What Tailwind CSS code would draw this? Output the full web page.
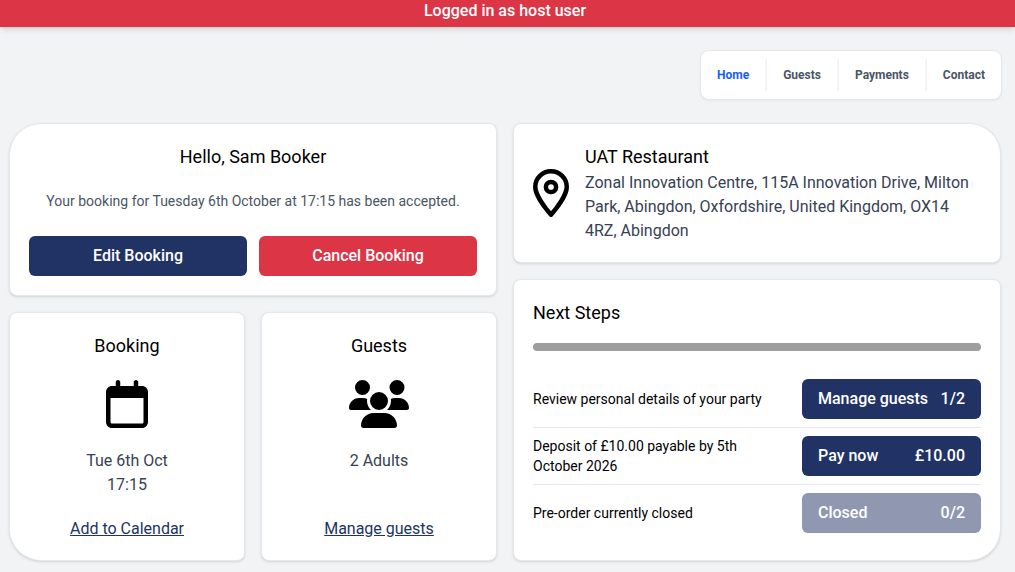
<!DOCTYPE html>
<html lang="en">

<head>
  <meta charset="UTF-8">
  <meta name="viewport" content="width=device-width, initial-scale=1.0">
  <script src="https://cdn.jsdelivr.net/npm/@tailwindcss/browser@4"></script>
  <title>Your booking</title>
</head>

<body class="bg-[#f2f3f5] min-h-screen font-['Roboto',sans-serif] text-base text-black">

  <div class="bg-[#dc3545] text-white font-medium text-center pl-[9px] pr-[14px] pb-[5px] shadow-md">
    <p class="leading-[22px]">Logged in as host user</p>
  </div>

  <div class="pl-[9px] pr-[14px] pb-[11px]">

    <!-- Navigation -->
    <nav class="flex justify-end py-6">
      <ul
        class="flex py-2 bg-white ring-1 ring-gray-200 rounded-lg shadow-sm text-xs font-bold text-gray-600 divide-x-2 divide-gray-100">
        <li><a href="#" class="block px-4 leading-8 text-blue-600">Home</a></li>
        <li><a href="#" class="block px-4 leading-8">Guests</a></li>
        <li><a href="#" class="block px-4 leading-8">Payments</a></li>
        <li><a href="#" class="block px-4 leading-8">Contact</a></li>
      </ul>
    </nav>

    <main class="grid grid-cols-2 gap-4">

      <div class="flex flex-col gap-4">
        <!-- Greeting -->
        <section
          class="bg-white border border-gray-200 rounded-lg rounded-tl-[32px] shadow-sm p-[19px] text-center">
          <h1 class="text-lg leading-7">Hello, Sam Booker</h1>
          <p class="mt-5 text-sm leading-5 text-gray-600">Your booking for Tuesday 6th October at 17:15 has been
            accepted.</p>
          <div class="mt-[25px] grid grid-cols-2 gap-3">
            <button type="button" class="h-10 rounded-md bg-[#213364] text-white font-medium">Edit Booking</button>
            <button type="button" class="h-10 rounded-md bg-[#dc3545] text-white font-medium">Cancel Booking</button>
          </div>
        </section>

        <div class="grid grid-cols-2 gap-4 grow">
          <!-- Booking date -->
          <section
            class="flex flex-col items-center bg-white border border-gray-200 rounded-lg rounded-bl-[32px] shadow-sm p-[19px] text-center text-gray-700">
            <h2 class="text-lg leading-7 text-black">Booking</h2>
            <svg class="mt-5 h-12 w-[42px] text-black" viewBox="0 0 448 512" fill="currentColor">
              <path
                d="M152 24c0-13.3-10.7-24-24-24s-24 10.7-24 24V64H64C28.7 64 0 92.7 0 128v16 48V448c0 35.3 28.7 64 64 64H384c35.3 0 64-28.7 64-64V192 144 128c0-35.3-28.7-64-64-64H344V24c0-13.3-10.7-24-24-24s-24 10.7-24 24V64H152V24zM48 192H400V448c0 8.8-7.2 16-16 16H64c-8.8 0-16-7.2-16-16V192z" />
            </svg>
            <p class="mt-[21px]">Tue 6th Oct<br>17:15</p>
            <a href="#" class="mt-auto text-[#213364] underline">Add to Calendar</a>
          </section>

          <!-- Guests -->
          <section
            class="flex flex-col items-center bg-white border border-gray-200 rounded-lg shadow-sm p-[19px] text-center text-gray-700">
            <h2 class="text-lg leading-7 text-black">Guests</h2>
            <svg class="mt-5 h-12 w-[60px] text-black" viewBox="0 0 640 512" fill="currentColor">
              <path
                d="M144 0a80 80 0 1 1 0 160A80 80 0 1 1 144 0zM512 0a80 80 0 1 1 0 160A80 80 0 1 1 512 0zM0 298.7C0 239.8 47.8 192 106.7 192h42.7c15.9 0 31 3.5 44.6 9.7c-1.3 7.2-1.9 14.7-1.9 22.3c0 38.2 16.8 72.5 43.3 96c-.2 0-.4 0-.7 0H21.3C9.6 320 0 310.4 0 298.7zM405.3 320c-.2 0-.4 0-.7 0c26.6-23.5 43.3-57.8 43.3-96c0-7.6-.7-15-1.9-22.3c13.6-6.3 28.7-9.7 44.6-9.7h42.7C592.2 192 640 239.8 640 298.7c0 11.8-9.6 21.3-21.3 21.3H405.3zM224 224a96 96 0 1 1 192 0 96 96 0 1 1 -192 0zM128 485.3C128 411.7 187.7 352 261.3 352H378.7C452.3 352 512 411.7 512 485.3c0 14.7-11.9 26.7-26.7 26.7H154.7c-14.7 0-26.7-11.9-26.7-26.7z" />
            </svg>
            <p class="mt-[21px]">2 Adults</p>
            <a href="#" class="mt-auto text-[#213364] underline">Manage guests</a>
          </section>
        </div>
      </div>

      <div class="flex flex-col gap-4">
        <!-- Venue -->
        <section
          class="flex items-center gap-4 bg-white border border-gray-200 rounded-lg rounded-tr-[32px] shadow-sm p-[19px]">
          <svg class="h-12 w-9 shrink-0" viewBox="0 0 36 48" fill="none" stroke="currentColor" stroke-width="4.5"
            stroke-linejoin="round">
            <path
              d="M18 2.25C9.3 2.25 2.25 9.2 2.25 17.8C2.25 25.5 11.5 38.3 18 45.7C24.5 38.3 33.75 25.5 33.75 17.8C33.75 9.2 26.7 2.25 18 2.25Z" />
            <circle cx="18" cy="18" r="5.1" />
          </svg>
          <div>
            <h2 class="text-lg leading-7">UAT Restaurant</h2>
            <p class="text-gray-700">Zonal Innovation Centre, 115A Innovation Drive, Milton Park, Abingdon,
              Oxfordshire, United Kingdom, OX14 4RZ, Abingdon</p>
          </div>
        </section>

        <!-- Next steps -->
        <section class="grow bg-white border border-gray-200 rounded-lg rounded-br-[32px] shadow-sm p-[19px]">
          <h2 class="text-lg leading-7">Next Steps</h2>
          <div class="mt-4 mb-5 h-2 rounded-full bg-[#9e9e9e]"></div>
          <ul class="divide-y divide-gray-200 text-sm leading-5">
            <li class="flex items-center justify-between gap-4 py-2">
              <p>Review personal details of your party</p>
              <button type="button"
                class="flex shrink-0 items-center justify-between w-[179px] h-10 px-4 rounded-md bg-[#213364] text-white text-base font-medium">
                <span>Manage guests</span><span>1/2</span>
              </button>
            </li>
            <li class="flex items-center justify-between gap-4 py-2">
              <p>Deposit of £10.00 payable by 5th October 2026</p>
              <button type="button"
                class="flex shrink-0 items-center justify-between w-[179px] h-10 px-4 rounded-md bg-[#213364] text-white text-base font-medium">
                <span>Pay now</span><span>£10.00</span>
              </button>
            </li>
            <li class="flex items-center justify-between gap-4 py-2">
              <p>Pre-order currently closed</p>
              <button type="button" disabled
                class="flex shrink-0 items-center justify-between w-[179px] h-10 px-4 rounded-md bg-[#213364] text-white text-base font-medium opacity-50">
                <span>Closed</span><span>0/2</span>
              </button>
            </li>
          </ul>
        </section>
      </div>

    </main>
  </div>

</body>

</html>
